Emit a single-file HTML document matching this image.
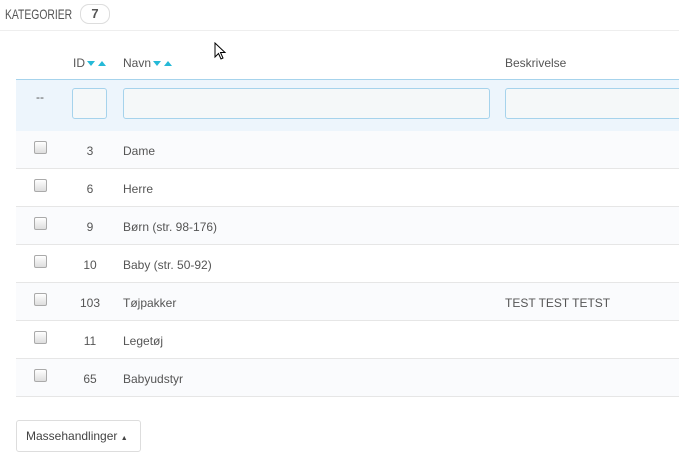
<!DOCTYPE html><html><head><style>
body{margin:0;width:679px;height:438px;overflow:hidden;background:#fff;font-family:"Liberation Sans",sans-serif;font-size:12px;color:#555;position:relative}
.a{position:absolute}
.hd{left:5px;top:6px;font-size:14px;color:#555;transform:scaleX(0.74);transform-origin:0 0}
.badge{left:80px;top:4px;width:28px;height:18px;border:1px solid #ddd;border-radius:9px;text-align:center;line-height:18px;font-weight:bold;color:#555;font-size:13px}
.line{left:0;top:30px;width:679px;height:1px;background:#eee}
.th{top:56px;font-size:12px;color:#555}
.car{display:inline-block;vertical-align:middle;margin-left:2px}
.flt{left:16px;top:79px;width:663px;height:51px;background:#edf5fc;border-top:1px solid #a6d3ec;border-bottom:1px solid #a6d3ec}
.in{top:88px;height:29px;background:#f5f8f9;border:1px solid #a6d3ec;border-radius:3px}
.row{left:16px;width:663px;height:37px;border-bottom:1px solid #e6e6e6}
.cb{position:absolute;left:18px;top:10px;width:11px;height:11px;border:1px solid #aaa;border-radius:2px;background:linear-gradient(#fff,#ddd)}
.id{position:absolute;left:54px;width:40px;text-align:center;top:13px}
.nm{position:absolute;left:107px;top:13px}
.ds{position:absolute;left:489px;top:13px}
.btn{left:16px;top:420px;width:123px;height:30px;border:1px solid #ddd;border-radius:3px;background:#fff}
</style></head><body>
<div class="a hd">KATEGORIER</div>
<div class="a badge">7</div>
<div class="a line"></div>
<div class="a th" style="left:73px">ID<svg class="car" width="20" height="8" viewBox="0 0 20 8"><path d="M0 1h8l-4 5z M11 6h8l-4-5z" fill="#25b9d7"/></svg></div>
<div class="a th" style="left:123px">Navn<svg class="car" width="20" height="8" viewBox="0 0 20 8"><path d="M0 1h8l-4 5z M11 6h8l-4-5z" fill="#25b9d7"/></svg></div>
<div class="a th" style="left:505px">Beskrivelse</div>
<svg class="a" style="left:214px;top:42px" width="14" height="20" viewBox="0 0 14 20"><path d="M1 1 L1 15 L4.5 11.5 L7 17 L9 16 L6.5 10.5 L11 10.5 Z" fill="#fff" stroke="#000" stroke-width="1"/></svg>
<div class="a flt"></div>
<div class="a" style="left:36px;top:90px">--</div>
<div class="a in" style="left:72px;width:33px"></div>
<div class="a in" style="left:123px;width:365px"></div>
<div class="a in" style="left:505px;width:190px"></div>
<div class="a row" style="top:131px;background:#fafbfd"><div class="cb"></div><div class="id">3</div><div class="nm">Dame</div></div>
<div class="a row" style="top:169px"><div class="cb"></div><div class="id">6</div><div class="nm">Herre</div></div>
<div class="a row" style="top:207px;background:#fafbfd"><div class="cb"></div><div class="id">9</div><div class="nm">Børn (str. 98-176)</div></div>
<div class="a row" style="top:245px"><div class="cb"></div><div class="id">10</div><div class="nm">Baby (str. 50-92)</div></div>
<div class="a row" style="top:283px;background:#fafbfd"><div class="cb"></div><div class="id">103</div><div class="nm">Tøjpakker</div><div class="ds">TEST TEST TETST</div></div>
<div class="a row" style="top:321px"><div class="cb"></div><div class="id">11</div><div class="nm">Legetøj</div></div>
<div class="a row" style="top:359px;background:#fafbfd"><div class="cb"></div><div class="id">65</div><div class="nm">Babyudstyr</div></div>
<div class="a btn"><div style="padding:8px 0 0 9px;color:#444">Massehandlinger <span style="font-size:7px">▲</span></div></div>
</body></html>
